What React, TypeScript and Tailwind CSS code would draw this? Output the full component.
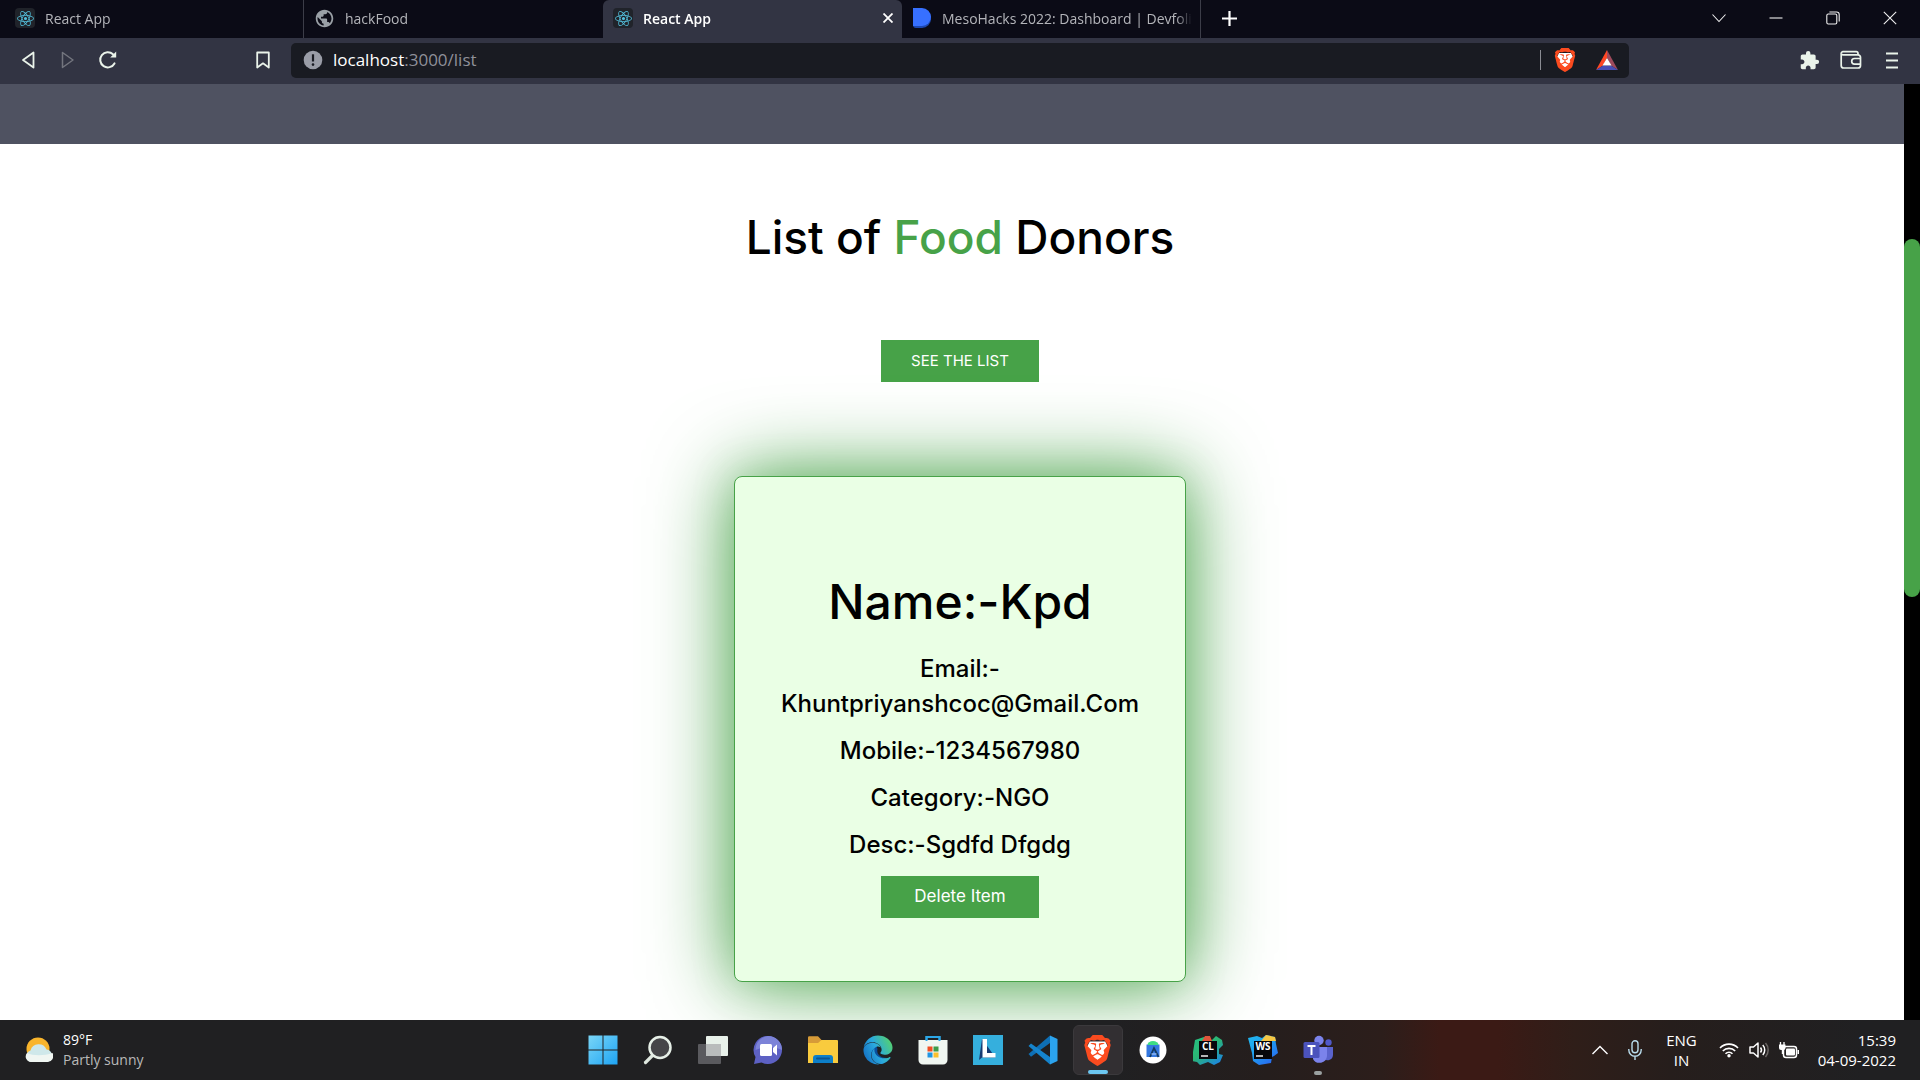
import type { ReactNode } from "react";
import { SiBrave, SiReact } from "react-icons/si";
import { FaEdge } from "react-icons/fa";
import { MdExtension, MdPublic } from "react-icons/md";

const ReactMark = () => (
  <span className="flex h-5 w-5 shrink-0 items-center justify-center rounded-sm bg-[#20232a]">
    <SiReact size={17} color="#53c1de" />
  </span>
);

const BraveMark = ({ size }: { size: number }) => (
  <svg width={size} height={size} viewBox="0 0 24 24">
    <path d="M6 5h12l2 4-3 9-5 4-5-4-3-9z" fill="#fff" />
    <SiBrave x="0" y="0" size={24} color="#fb4b1f" />
  </svg>
);

type TabProps = { title: string; icon: ReactNode; active?: boolean; divider?: boolean };

const Tab = ({ title, icon, active, divider }: TabProps) => (
  <div
    className={
      "flex h-full w-[299px] items-center pb-0.5 pl-2.5 pr-2 text-[14px] " +
      (active ? "rounded-t-md bg-[#323443] font-semibold text-white" : "text-[#b4b5ba]") +
      (divider ? " border-r border-[#3c3d48]" : "")
    }
  >
    <button className="flex h-full min-w-0 flex-1 items-center gap-2.5 text-left">
      {icon}
      <span className="min-w-0 flex-1 overflow-hidden whitespace-nowrap [mask-image:linear-gradient(90deg,#000_calc(100%-16px),transparent)]">
        {title}
      </span>
    </button>
    {active && (
      <button aria-label="Close tab" className="flex h-5 w-3 items-center justify-center">
        <svg width="10" height="10" viewBox="0 0 10 10" stroke="#fff" strokeWidth="1.8">
          <path d="M0.5 0.5 9.5 9.5M9.5 0.5 0.5 9.5" />
        </svg>
      </button>
    )}
  </div>
);

const WindowButton = ({ label, children }: { label: string; children: ReactNode }) => (
  <button aria-label={label} className="flex h-full w-[57px] items-center justify-center">
    <svg width="14" height="14" viewBox="0 0 14 14" fill="none" stroke="#f0f0f0" strokeWidth="1.1">
      {children}
    </svg>
  </button>
);

const TabStrip = () => (
  <header className="flex h-[38px] shrink-0 items-center bg-[#0b0b16]">
    <div className="flex h-full items-center pl-[5px]">
      <Tab title="React App" icon={<ReactMark />} divider />
      <Tab title="hackFood" icon={<MdPublic size={21} color="#9aa0a6" className="shrink-0" />} />
      <Tab title="React App" icon={<ReactMark />} active />
      <Tab
        title="MesoHacks 2022: Dashboard | Devfolio"
        icon={
          <svg width="20" height="20" viewBox="0 0 20 20" className="shrink-0">
            <path d="M1 2h9a8 8 0 0 1 0 18H4a3 3 0 0 1-3-3z" fill="#1c47b0" />
            <path d="M1 0h9a9 9 0 0 1 0 18H1z" fill="#3770ff" />
          </svg>
        }
        divider
      />
    </div>
    <button aria-label="New tab" className="flex h-full w-14 items-center justify-center pb-0.5">
      <svg width="15" height="15" viewBox="0 0 15 15" stroke="#fff" strokeWidth="2.2">
        <path d="M7.5 0v15M0 7.5h15" />
      </svg>
    </button>
    <div className="ml-auto flex h-full pb-0.5 pr-0.5">
      <WindowButton label="Search tabs">
        <path d="M0.5 3.5 7 10.5l6.5-7" />
      </WindowButton>
      <WindowButton label="Minimize">
        <path d="M0.5 7h13" />
      </WindowButton>
      <WindowButton label="Restore">
        <rect x="0.8" y="3" width="10" height="10" rx="1.5" />
        <path d="M3.4 1h7.2a2.6 2.6 0 0 1 2.6 2.6v7" />
      </WindowButton>
      <WindowButton label="Close window">
        <path d="M0.8 0.8 13.2 13.2M13.2 0.8 0.8 13.2" />
      </WindowButton>
    </div>
  </header>
);

const Toolbar = () => (
  <nav className="flex h-[46px] shrink-0 items-center bg-[#323443] pb-0.5">
    <div className="flex w-[291px] shrink-0 items-center pl-[18px] pr-[18px]">
      <div className="flex flex-1 items-center gap-5">
        <button aria-label="Back" className="flex w-5 justify-center">
          <svg width="16" height="18" viewBox="0 0 16 18" fill="none" stroke="#eaf3ea" strokeWidth="1.8" strokeLinejoin="round">
            <path d="M13.5 1.5v15L3 9z" />
          </svg>
        </button>
        <button aria-label="Forward" className="flex w-5 justify-center">
          <svg width="16" height="18" viewBox="0 0 16 18" fill="none" stroke="#73757e" strokeWidth="1.5" strokeLinejoin="round">
            <path d="M2.5 1.5v15L13 9z" />
          </svg>
        </button>
        <button aria-label="Reload" className="flex w-5 justify-center">
          <svg width="20" height="20" viewBox="0 0 20 20" fill="none" stroke="#eaf3ea" strokeWidth="2" strokeLinecap="round">
            <path d="M16.5 13.4A7.6 7.6 0 1 1 15 4.2" />
            <path d="M12.2 7.5h6V1.6z" fill="#eaf3ea" stroke="none" />
          </svg>
        </button>
      </div>
      <button aria-label="Bookmark this page" className="flex w-5 justify-center">
        <svg width="14" height="18" viewBox="0 0 14 18" fill="none" stroke="#eaf3ea" strokeWidth="1.8" strokeLinejoin="round">
          <path d="M1.2 1.5h11.6v15L7 12.3l-5.8 4.2z" />
        </svg>
      </button>
    </div>
    <div className="flex h-[35px] flex-1 items-center rounded-[5px] bg-[#191b22] pl-3 pr-[10px] text-[17px]">
      <svg width="20" height="20" viewBox="0 0 20 20" className="mr-2.5 shrink-0">
        <circle cx="10" cy="10" r="9.3" fill="#9a9da7" />
        <path d="M10 4.3v7.2" stroke="#191b22" strokeWidth="2.2" />
        <circle cx="10" cy="14.6" r="1.3" fill="#191b22" />
      </svg>
      <a href="#list" className="flex-1 text-[#8f9099]">
        <span className="text-white">localhost</span>:3000/list
      </a>
      <span className="h-5 w-px bg-[#8a8c93]" />
      <button aria-label="Brave Shields" className="ml-3">
        <BraveMark size={24} />
      </button>
      <button aria-label="Brave Rewards" className="ml-[18px]">
        <svg width="24" height="22" viewBox="0 0 24 22">
          <path d="M12 1 1 21l7-4.5L12 9z" fill="#ff4724" />
          <path d="M12 1v8l4 7.5 7 4.5z" fill="#9e4a5c" />
          <path d="M1 21h22l-7-4.5H8z" fill="#4a4fb5" />
          <path d="M12 9l4.5 7.5h-9z" fill="#fff" />
        </svg>
      </button>
    </div>
    <div className="flex w-[291px] shrink-0 items-center justify-end gap-5 pr-[18px]">
      <button aria-label="Extensions">
        <MdExtension size={21} color="#eaf3ea" />
      </button>
      <button aria-label="Wallet">
        <svg width="22" height="20" viewBox="0 0 22 20" fill="none" stroke="#eaf3ea" strokeWidth="1.7">
          <path d="M18 5V3.5A1.8 1.8 0 0 0 16.2 1.7H3A1.8 1.8 0 0 0 1.2 3.5" />
          <path d="M1.2 3.3V15.500A2.5 2.5 0 0 0 3.7 18H18a2.5 2.5 0 0 0 2.5-2.5V7.3A2.5 2.5 0 0 0 18 4.8H2.8A1.6 1.6 0 0 1 1.2 3.3z" />
          <path d="M20.5 8.5H14.5a2.8 2.8 0 0 0 0 5.6h6" />
        </svg>
      </button>
      <button aria-label="Menu" className="flex w-5 justify-center">
        <svg width="14" height="17" viewBox="0 0 14 17" stroke="#eaf3ea" strokeWidth="1.8">
          <path d="M1 1.5h12M1 8.5h12M1 15.5h12" />
        </svg>
      </button>
    </div>
  </nav>
);

const GreenButton = ({ large, children }: { large?: boolean; children: ReactNode }) => (
  <button className={"h-[42px] w-[158px] bg-[#47a248] font-normal text-white " + (large ? "text-[17px]" : "text-[15px]")}>
    {children}
  </button>
);

const details = ["Mobile:-1234567980", "Category:-NGO", "Desc:-Sgdfd Dfgdg"];

const Page = () => (
  <main className="relative min-h-0 flex-1 overflow-hidden bg-white font-['Inter',sans-serif] font-medium text-black">
    <div className="h-[60px] bg-[#4f5261]" />
    <section className="flex flex-col items-center pt-[58px]">
      <h1 className="text-[46px] leading-[70px]">
        List of <span className="text-[#47a248]">Food</span> Donors
      </h1>
      <div className="mt-[68px]">
        <GreenButton>SEE THE LIST</GreenButton>
      </div>
      <article className="mt-[94px] flex w-[452px] flex-col items-center rounded-lg border border-[#47a248] bg-[#eaffe5] px-8 pb-[63px] pt-[90px] text-center shadow-[0_0_84px_#47a248,0_0_40px_#47a24844]">
        <h2 className="text-[48px] leading-[70px]">Name:-Kpd</h2>
        <div className="mt-[14px] flex w-full flex-col gap-3 text-[24px] leading-[35px]">
          <p>
            Email:-
            <br />
            Khuntpriyanshcoc@Gmail.Com
          </p>
          {details.map((line) => (
            <p key={line}>{line}</p>
          ))}
        </div>
        <div className="mt-[14px]">
          <GreenButton large>Delete Item</GreenButton>
        </div>
      </article>
    </section>
    <div className="absolute inset-y-0 right-0 w-4 bg-black pt-[155px]">
      <div className="h-[358px] rounded-full bg-[#47a248]" />
    </div>
  </main>
);

const StartIcon = () => (
  <svg width="30" height="30" viewBox="0 0 30 30">
    <defs>
      <linearGradient id="start" x1="0" y1="0" x2="1" y2="1">
        <stop offset="0" stopColor="#7ad6f7" />
        <stop offset="1" stopColor="#1ea4f4" />
      </linearGradient>
    </defs>
    <path d="M0.5 0.5h14v14h-14zM15.5 0.5h14v14h-14zM0.5 15.5h14v14h-14zM15.5 15.5h14v14h-14z" fill="url(#start)" />
  </svg>
);

const SearchIcon = () => (
  <svg width="30" height="30" viewBox="0 0 30 30">
    <path d="M10.5 19.5 2.5 27.5" stroke="#dfe8e0" strokeWidth="3.2" strokeLinecap="round" />
    <circle cx="17" cy="12.5" r="10.5" fill="#454548" stroke="#e6efe7" strokeWidth="2.5" />
  </svg>
);

const TaskViewIcon = () => (
  <svg width="32" height="30" viewBox="0 0 32 30">
    <rect x="9" y="1" width="22" height="20" rx="1" fill="#e8f1ea" />
    <rect x="1" y="9" width="23" height="20" rx="1" fill="#5a5a5e" />
    <path d="M9 9h15v12H9z" fill="#b9bcbc" />
  </svg>
);

const ChatIcon = () => (
  <svg width="30" height="30" viewBox="0 0 30 30">
    <path d="M15 1a14 14 0 1 1-6.5 26.4L1 29l1.5-7A14 14 0 0 1 15 1z" fill="#5d61c4" />
    <path d="M15 1a14 14 0 0 1 14 14c-8-4-18-4-26.5 0A14 14 0 0 1 15 1z" fill="#7c83d8" />
    <rect x="7" y="9" width="12" height="12" rx="1.5" fill="#fff" />
    <path d="M20 13l4-3.5v11L20 17z" fill="#fff" />
  </svg>
);

const FolderIcon = () => (
  <svg width="30" height="30" viewBox="0 0 30 30">
    <path d="M0 2.5A1.2 1.2 0 0 1 1.2 1.3H10L13.5 5H24v7H0z" fill="#d69b38" />
    <path d="M0 8h10l3.5-3H29a1 1 0 0 1 1 1v22H0z" fill="#f9cb3e" />
    <path d="M5 28v-5a3 3 0 0 1 3-3h14a3 3 0 0 1 3 3v5z" fill="#0d7fc9" />
    <path d="M9 23.5h12" stroke="#0a5493" strokeWidth="2" strokeLinecap="round" />
  </svg>
);

const EdgeIcon = () => (
  <svg width="30" height="30" viewBox="0 0 30 30">
    <defs>
      <linearGradient id="edge" x1="0" y1="0.7" x2="1" y2="0.2">
        <stop offset="0" stopColor="#1572c4" />
        <stop offset="0.45" stopColor="#2aa9df" />
        <stop offset="1" stopColor="#56d36a" />
      </linearGradient>
    </defs>
    <path d="M13 10c-7 3-6 16 6 18.5 4-.5 7-3 9-6C18 25 13 19 14.5 14z" fill="#0b4f9d" />
    <FaEdge x="0" y="0" size={30} fill="url(#edge)" />
  </svg>
);

const StoreIcon = () => (
  <svg width="30" height="30" viewBox="0 0 30 30">
    <path d="M8.500 7V2h13v5" fill="none" stroke="#2ca7e8" strokeWidth="2" />
    <path d="M0.5 5h29v20a4.5 4.5 0 0 1-4.5 4.5H5A4.5 4.5 0 0 1 .5 25z" fill="#f0f6f1" />
    <path d="M8.500 6V2h13v4" fill="none" stroke="#2ca7e8" strokeWidth="2" />
    <path d="M9.5 11.5h5v5h-5z" fill="#f04e23" />
    <path d="M15.5 11.5h5v5h-5z" fill="#3e9b48" />
    <path d="M9.5 17.5h5v5h-5z" fill="#2196e3" />
    <path d="M15.5 17.5h5v5h-5z" fill="#fbc02d" />
  </svg>
);

const LIcon = () => (
  <svg width="30" height="30" viewBox="0 0 30 30">
    <path d="M0 0h30v30H0z" fill="#35afdd" />
    <path d="M9 4 6 25l3-2.5h13.5" fill="#173a72" />
    <path d="M9.5 4H14v14h8.5v4.5h-13z" fill="#fff" />
  </svg>
);

const CodeIcon = () => (
  <svg width="30" height="30" viewBox="0 0 30 30">
    <path d="M22 8 3 21.8.5 19 22 .5z" fill="#0e6fb5" />
    <path d="M3 8.500.5 11 22 29.500V22z" fill="#1584cd" />
    <path d="M22 .5 29.500 4v22L22 29.500z" fill="#2ba3ee" />
  </svg>
);

const StudioIcon = () => (
  <svg width="28" height="28" viewBox="0 0 28 28">
    <circle cx="14" cy="14" r="13.5" fill="#fff" />
    <path d="M7.500 8.500h13V21h-13z" fill="#3478e0" />
    <path d="M8.500 9a5.500 4 0 0 1 11 0z" fill="#3ddc84" />
    <path d="M11 21l4-9 4.500 9" fill="none" stroke="#123a63" strokeWidth="1.800" />
    <path d="M12.500 18h5" stroke="#8fb7f2" strokeWidth="1.500" />
  </svg>
);

type JetBrainsProps = { label: string; colors: string[]; outline: string; accent: string };

const JetBrainsIcon = ({ label, colors, outline, accent }: JetBrainsProps) => (
  <svg width="30" height="30" viewBox="0 0 30 30">
    <defs>
      <linearGradient id={"jb" + label} x1="0" y1="0" x2="0.8" y2="1">
        <stop offset="0" stopColor={colors[0]} />
        <stop offset="0.5" stopColor={colors[1]} />
        <stop offset="1" stopColor={colors[2]} />
      </linearGradient>
    </defs>
    <path d={outline} fill={"url(#jb" + label + ")"} />
    <path d={accent} fill={colors[3]} />
    <path d="M6 6h18v18H6z" fill="#07070b" />
    <text x="15" y="15" textAnchor="middle" fill="#fff" fontSize="10" fontWeight="700" fontFamily="Open Sans, sans-serif">
      {label}
    </text>
    <path d="M8 21h7" stroke="#fff" strokeWidth="1.4" />
  </svg>
);

const TeamsIcon = () => (
  <svg width="30" height="30" viewBox="0 0 30 30">
    <circle cx="16" cy="5.5" r="4.7" fill="#7b83eb" />
    <circle cx="25.5" cy="7.5" r="3.2" fill="#5059c9" />
    <path d="M21 12h9v8a5.5 5.5 0 0 1-9 4z" fill="#5a63cc" />
    <path d="M10 12h14v9a7.500 7.500 0 0 1-14 3z" fill="#7b83eb" />
    <rect x="0.5" y="7" width="16" height="16" rx="1.5" fill="#4b53bc" />
    <path d="M4.5 11h8M8.5 11v9" stroke="#fff" strokeWidth="2" />
  </svg>
);

const apps: { name: string; icon: ReactNode; state?: "active" | "open" }[] = [
  { name: "Start", icon: <StartIcon /> },
  { name: "Search", icon: <SearchIcon /> },
  { name: "Task view", icon: <TaskViewIcon /> },
  { name: "Chat", icon: <ChatIcon /> },
  { name: "File Explorer", icon: <FolderIcon /> },
  { name: "Edge", icon: <EdgeIcon /> },
  { name: "Store", icon: <StoreIcon /> },
  { name: "L", icon: <LIcon /> },
  { name: "Visual Studio Code", icon: <CodeIcon /> },
  { name: "Brave", icon: <BraveMark size={31} />, state: "active" },
  { name: "Android Studio", icon: <StudioIcon /> },
  {
    name: "CLion",
    icon: (
      <JetBrainsIcon
        label="CL"
        colors={["#25c285", "#2bb673", "#1c86e0", "#e0543a"]}
        outline="M2 5 11 2l8 3 4-4 6 4 1 5-4 4 0 5 4 1-3 7-6 3-6-3-8 3-3-3-5-1 1-9z"
        accent="M9 6l3-5 5 0 2 5z"
      />
    ),
  },
  {
    name: "WebStorm",
    icon: (
      <JetBrainsIcon
        label="WS"
        colors={["#22b8ef", "#1e9ff0", "#2a66f0", "#f6c744"]}
        outline="M0 3 9 1l5 2 4-3 9 2 1 7 2 9-4 3-2 1-1 6-12 2-6-4-1-8z"
        accent="M13 6l5-6 9 2 1 4z"
      />
    ),
  },
  { name: "Teams", icon: <TeamsIcon />, state: "open" },
];

const Taskbar = () => (
  <footer className="grid h-[60px] shrink-0 grid-cols-[1fr_auto_1fr] items-center bg-[linear-gradient(90deg,#202022_0%,#202022_58%,#251e1d_66%,#2c1e1b_72%,#3b1a15_75%,#3b1a15_78%,#2f1e19_82%,#261e1c_87%,#202022_97%)] text-[14px] leading-5 text-white">
    <button className="flex items-center gap-2.5 pl-[25px] text-left">
      <svg width="28" height="26" viewBox="0 0 28 26">
        <circle cx="13" cy="12" r="11.5" fill="#f9b52c" />
        <path d="M6 25a6 6 0 0 1-.5-11.5 8.500 8.500 0 0 1 16-1A6.300 6.300 0 0 1 22 25z" fill="#cfe8ea" />
        <path d="M6 25a5.500 5.500 0 0 1-4-9c6 3 17 3 25.500 0A6 6 0 0 1 22 25z" fill="#f0f6f2" />
      </svg>
      <span>
        <span className="block">89°F</span>
        <span className="block text-[#b9b9b9]">Partly sunny</span>
      </span>
    </button>
    <div className="flex gap-[5px]">
      {apps.map((app) => (
        <button
          key={app.name}
          aria-label={app.name}
          className={
            "relative flex h-[50px] w-[50px] items-center justify-center rounded-md" +
            (app.state === "active" ? " border border-[#3b393c] bg-[#322f32]" : "")
          }
        >
          {app.icon}
          {app.state === "active" && <span className="absolute bottom-0 h-1 w-5 rounded-full bg-[#6cc7f1]" />}
          {app.state === "open" && <span className="absolute bottom-0 h-1 w-2 rounded-full bg-[#9aa0a0]" />}
        </button>
      ))}
    </div>
    <div className="flex items-center justify-end pr-6 text-[15px]">
      <button aria-label="Show hidden icons" className="mr-[20px]">
        <svg width="16" height="10" viewBox="0 0 16 10" fill="none" stroke="#fff" strokeWidth="1.4">
          <path d="M0.5 9 8 1.5 15.5 9" />
        </svg>
      </button>
      <button aria-label="Microphone" className="mr-6">
        <svg width="14" height="20" viewBox="0 0 14 20" fill="none" stroke="#b9dcec" strokeWidth="1.4">
          <rect x="4" y="0.8" width="6" height="12" rx="3" />
          <path d="M0.8 9v1a6.2 6.2 0 0 0 12.4 0V9M7 16.2V20" />
        </svg>
      </button>
      <button className="mr-[22px] text-center">
        <span className="block">ENG</span>
        <span className="block">IN</span>
      </button>
      <button aria-label="Network, volume and battery" className="mr-[18px] flex items-center gap-2.5">
        <svg width="20" height="16" viewBox="0 0 20 16" fill="none" stroke="#fff" strokeWidth="1.6">
          <path d="M1 6a12.500 12.500 0 0 1 18 0M3.800 9a8.700 8.700 0 0 1 12.400 0M6.500 11.800a5 5 0 0 1 7 0" />
          <circle cx="10" cy="13.700" r="1.700" fill="#fff" stroke="none" />
        </svg>
        <svg width="20" height="18" viewBox="0 0 20 18" fill="none" stroke="#fff" strokeWidth="1.5">
          <path d="M1 6h3.500L9 2v14L4.500 12H1z" strokeLinejoin="round" />
          <path d="M11.500 6.500a4 4 0 0 1 0 5M13.800 4a7.500 7.500 0 0 1 0 10" />
          <path d="M16.500 2a10.500 10.500 0 0 1 0 14" stroke="#6b6664" />
        </svg>
        <svg width="21" height="17" viewBox="0 0 21 17">
          <rect x="4.500" y="4.500" width="13" height="11" rx="2.500" fill="none" stroke="#fff" strokeWidth="1.500" />
          <rect x="7" y="6.500" width="9" height="7" rx="1" fill="#fff" />
          <path d="M18.500 8h1.500v4h-1.500z" fill="#fff" />
          <path d="M0 2.500h6.500V6a2 2 0 0 1-2 2H4v4H2.800V8H2a2 2 0 0 1-2-2z" fill="#fff" />
          <path d="M1.500 0v3M5 0v3" stroke="#fff" strokeWidth="1.300" />
        </svg>
      </button>
      <button className="text-right">
        <time className="block">15:39</time>
        <time className="block">04-09-2022</time>
      </button>
    </div>
  </footer>
);

export default function App() {
  return (
    <div className="flex h-screen flex-col overflow-hidden font-['Open_Sans',sans-serif]">
      <TabStrip />
      <Toolbar />
      <Page />
      <Taskbar />
    </div>
  );
}
